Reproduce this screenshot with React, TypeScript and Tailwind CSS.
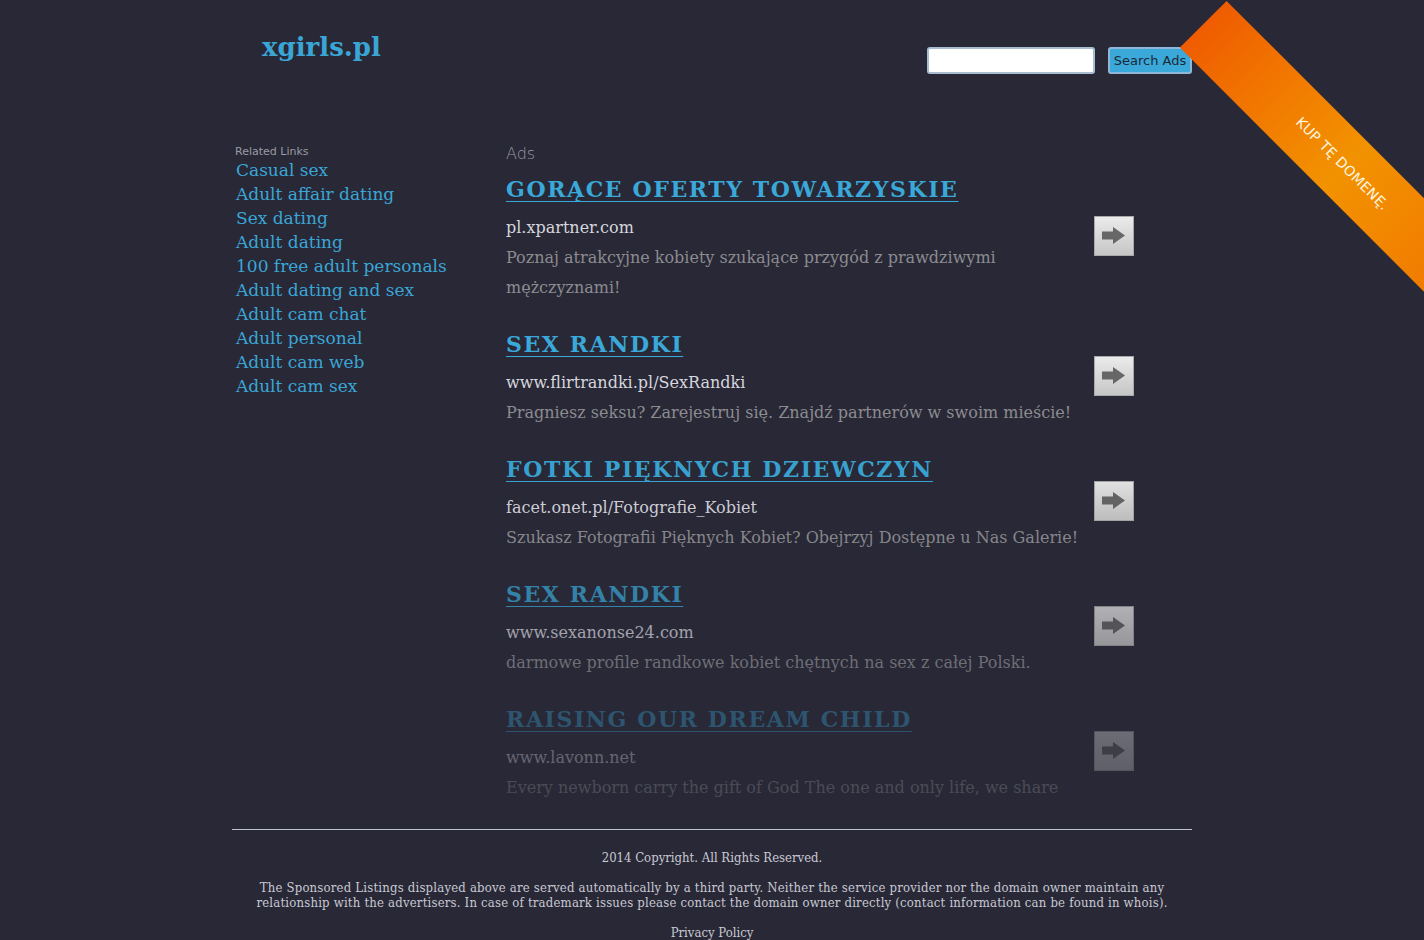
import React from "react";

const serif = "font-['DejaVu_Serif','Liberation_Serif',serif]";
const sans = "font-['DejaVu_Sans','Liberation_Sans',sans-serif]";

const links = [
  "Casual sex",
  "Adult affair dating",
  "Sex dating",
  "Adult dating",
  "100 free adult personals",
  "Adult dating and sex",
  "Adult cam chat",
  "Adult personal",
  "Adult cam web",
  "Adult cam sex",
];

const ads = [
  {
    title: "Gorące oferty towarzyskie",
    url: "pl.xpartner.com",
    desc: "Poznaj atrakcyjne kobiety szukające przygód z prawdziwymi mężczyznami!",
    fade: "opacity-100",
  },
  {
    title: "Sex Randki",
    url: "www.flirtrandki.pl/SexRandki",
    desc: "Pragniesz seksu? Zarejestruj się. Znajdź partnerów w swoim mieście!",
    fade: "opacity-100",
  },
  {
    title: "Fotki Pięknych Dziewczyn",
    url: "facet.onet.pl/Fotografie_Kobiet",
    desc: "Szukasz Fotografii Pięknych Kobiet? Obejrzyj Dostępne u Nas Galerie!",
    fade: "opacity-95",
  },
  {
    title: "Sex Randki",
    url: "www.sexanonse24.com",
    desc: "darmowe profile randkowe kobiet chętnych na sex z całej Polski.",
    fade: "opacity-70",
  },
  {
    title: "Raising Our Dream Child",
    url: "www.lavonn.net",
    desc: "Every newborn carry the gift of God The one and only life, we share",
    fade: "opacity-35",
  },
];

function ArrowButton() {
  return (
    <div className="mb-[5px] h-10 w-10 shrink-0 border border-[#a9a9a9] bg-gradient-to-b from-[#ebebeb] to-[#c6c6c6]">
      <svg width="38" height="38" viewBox="0 0 38 38">
        <path d="M7 14.5H18V10L30 18.5L18 27V22.5H7Z" fill="#676767" />
      </svg>
    </div>
  );
}

// diagonal "buy this domain" band in the top-right corner
function Ribbon() {
  return (
    <div className="pointer-events-none absolute right-0 top-0 h-[300px] w-[250px] overflow-hidden">
      <div className="absolute left-[-44px] top-[168px] flex h-[66px] w-[500px] rotate-45 items-center bg-gradient-to-r from-[#ef5c00] from-0% via-[#f29200] via-40% to-[#ef6000] to-100%">
        <span className={`w-[394px] text-center text-[14px] tracking-[0.3px] text-[#fff6e0] ${sans}`}>
          KUP TĘ DOMENĘ.
        </span>
      </div>
    </div>
  );
}

export default function App() {
  return (
    <div className="relative min-h-screen overflow-hidden bg-[#282837]">
      <Ribbon />
      <div className="mx-auto w-[960px]">
        <header className="flex h-[143px] items-start justify-between">
          <a className={`pl-[30px] pt-[28px] text-[26px] font-bold leading-[38px] text-[#3aa6d6] ${serif}`}>
            xgirls.pl
          </a>
          <form className="flex gap-[13px] pt-[47px]">
            <input className="h-[27px] w-[168px] rounded-[3px] border-2 border-[#a9bdd2] bg-white" />
            <button
              type="button"
              className={`h-[27px] w-[84px] rounded-[3px] border-2 border-[#8fb6d8] bg-[#3aa8d9] text-[13px] leading-[22px] text-[#1c2837] ${sans}`}
            >
              Search Ads
            </button>
          </form>
        </header>

        <main className="flex">
          <aside className="w-[274px] pl-[3px] pt-[2px]">
            <p className={`text-[11px] leading-[13px] text-[#9a9aa4] ${sans}`}>Related Links</p>
            <ul className={`pl-px text-[17px] leading-[24px] text-[#3aa6d6] ${serif}`}>
              {links.map((l) => (
                <li key={l}>
                  <a>{l}</a>
                </li>
              ))}
            </ul>
          </aside>

          <section className="flex-1 pt-px">
            <p className={`text-[16px] font-extralight leading-[20px] text-[#9a9aa4] ${sans}`}>Ads</p>
            <div className="mt-[10px]">
              {ads.map((ad, i) => (
                <div key={i} className={`flex items-center pb-[26px] ${ad.fade}`}>
                  <div className={`w-[580px] ${serif}`}>
                    <a className="block w-fit text-[22px] font-bold uppercase leading-[30px] tracking-[1.6px] text-[#3aa8d8] underline decoration-1 underline-offset-[4px]">
                      {ad.title}
                    </a>
                    <p className="mt-[9px] text-[16px] leading-[30px] text-[#d6d6dc]">{ad.url}</p>
                    <p className="text-[16px] leading-[30px] text-[#8c8c8f]">{ad.desc}</p>
                  </div>
                  <div className="ml-[8px]">
                    <ArrowButton />
                  </div>
                </div>
              ))}
            </div>
          </section>
        </main>

        <footer className="border-t border-[#b9c1d0] pb-4 text-center text-[13px] leading-[15px] text-[#c9c9d2] font-['DejaVu_Serif_Condensed','DejaVu_Serif',serif] font-stretch-condensed">
          <p className="mt-[20px]">2014 Copyright. All Rights Reserved.</p>
          <p className="mx-auto mt-[15px] w-[940px] tracking-[0.2px]">
            The Sponsored Listings displayed above are served automatically by a third party. Neither the service
            provider nor the domain owner maintain any relationship with the advertisers. In case of trademark issues
            please contact the domain owner directly (contact information can be found in whois).
          </p>
          <p className="mt-[15px]">
            <a>Privacy Policy</a>
          </p>
        </footer>
      </div>
    </div>
  );
}
